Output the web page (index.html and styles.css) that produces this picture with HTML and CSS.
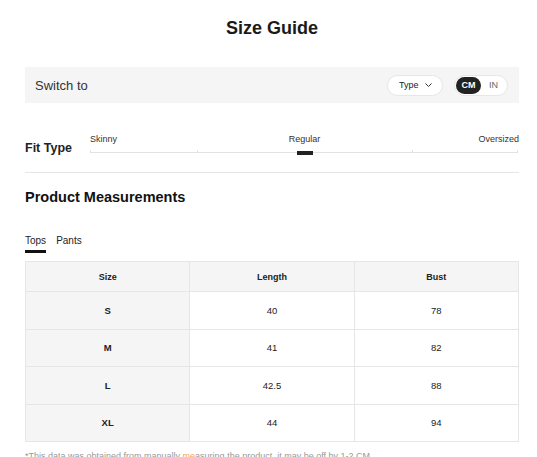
FILE: index.html
```html
<!DOCTYPE html>
<html lang="en">
<head>
<meta charset="utf-8">
<title>Size Guide</title>
<link rel="stylesheet" href="styles.css">
</head>
<body>
<div class="page">
  <h1 class="title">Size Guide</h1>

  <div class="switch-bar">
    <span class="switch-label">Switch to</span>
    <div class="switch-controls">
      <button class="type-pill" type="button">Type
        <svg class="chev" width="7" height="4" viewBox="0 0 7 4"><path d="M0.5 0.5 L3.5 3.5 L6.5 0.5" fill="none" stroke="#333" stroke-width="1"/></svg>
      </button>
      <div class="unit-toggle">
        <span class="unit unit-active">CM</span>
        <span class="unit">IN</span>
      </div>
    </div>
  </div>

  <div class="fit">
    <div class="fit-label">Fit Type</div>
    <div class="fit-scale">
      <div class="fit-names">
        <span class="fit-name-left">Skinny</span>
        <span class="fit-name-center">Regular</span>
        <span class="fit-name-right">Oversized</span>
      </div>
      <div class="fit-track">
        <span class="tick tick-0"></span>
        <span class="tick tick-25"></span>
        <span class="tick tick-75"></span>
        <span class="tick tick-100"></span>
        <span class="fit-marker"></span>
      </div>
    </div>
  </div>

  <div class="divider"></div>

  <h2 class="section-title">Product Measurements</h2>

  <div class="tabs">
    <span class="tab tab-active">Tops</span>
    <span class="tab">Pants</span>
  </div>

  <table class="size-table">
    <thead>
      <tr><th>Size</th><th>Length</th><th>Bust</th></tr>
    </thead>
    <tbody>
      <tr><th>S</th><td>40</td><td>78</td></tr>
      <tr><th>M</th><td>41</td><td>82</td></tr>
      <tr><th>L</th><td>42.5</td><td>88</td></tr>
      <tr><th>XL</th><td>44</td><td>94</td></tr>
    </tbody>
  </table>

  <p class="note">*This data was obtained from manually <span class="note-hl">me</span>asuring the product, it may be off by 1-2 CM.</p>
</div>
</body>
</html>
```

FILE: styles.css
```css
* { box-sizing: border-box; }

html, body {
  margin: 0;
  padding: 0;
  background: #fff;
}

body {
  font-family: "Liberation Sans", Arial, sans-serif;
  color: #222;
}

.page {
  padding: 17px 18px 0 25px;
}

.title {
  margin: 0;
  font-size: 18px;
  line-height: 22px;
  font-weight: 700;
  text-align: center;
  color: #1a1a1a;
}

.switch-bar {
  margin-top: 28px;
  height: 36px;
  background: #f5f5f5;
  display: flex;
  align-items: center;
  justify-content: space-between;
  padding: 0 11px 0 10px;
}

.switch-label {
  font-size: 13px;
  color: #333;
}

.switch-controls {
  display: flex;
  align-items: center;
  gap: 11px;
}

.type-pill {
  height: 21px;
  width: 56px;
  border: 1px solid #e6e6e6;
  border-radius: 11px;
  background: #fff;
  font-family: inherit;
  font-size: 9px;
  color: #222;
  display: flex;
  align-items: center;
  gap: 6px;
  padding: 0 0 0 11px;
  margin: 0;
}

.chev { display: block; }

.unit-toggle {
  height: 21px;
  border: 1px solid #e6e6e6;
  border-radius: 11px;
  background: #fff;
  padding: 1px;
  display: flex;
  align-items: center;
}

.unit {
  height: 17px;
  line-height: 17px;
  font-size: 9px;
  color: #666;
  padding: 0 8px;
}

.unit-active {
  width: 25px;
  padding: 0;
  text-align: center;
  background: #222;
  color: #fff;
  font-weight: 700;
  border-radius: 9px;
}

.fit {
  margin-top: 31px;
  display: flex;
  align-items: flex-start;
}

.fit-label {
  width: 65px;
  padding-top: 7px;
  font-size: 12.5px;
  line-height: 15px;
  font-weight: 700;
  color: #222;
}

.fit-scale {
  flex: 1;
}

.fit-names {
  display: grid;
  grid-template-columns: 1fr 1fr 1fr;
  font-size: 9px;
  line-height: 11px;
  color: #333;
}

.fit-name-left { text-align: left; }
.fit-name-center { text-align: center; }
.fit-name-right { text-align: right; }

.fit-track {
  position: relative;
  margin-top: 5px;
  height: 5px;
}

.fit-track::before {
  content: "";
  position: absolute;
  left: 0;
  right: 1px;
  top: 2px;
  height: 1px;
  background: #e2e2e2;
}

.tick {
  position: absolute;
  top: 0;
  width: 1px;
  height: 3px;
  background: #e2e2e2;
}

.tick-0 { left: 0; }
.tick-25 { left: 25%; }
.tick-75 { left: 75%; }
.tick-100 { right: 1px; }

.fit-marker {
  position: absolute;
  left: 50%;
  top: 1px;
  width: 16px;
  height: 4px;
  margin-left: -8px;
  background: #222;
}

.divider {
  margin-top: 16px;
  height: 1px;
  background: #e5e5e5;
}

.section-title {
  margin: 15px 0 0;
  font-size: 14.5px;
  line-height: 18px;
  font-weight: 700;
  color: #111;
}

.tabs {
  margin-top: 29px;
  display: flex;
  gap: 10px;
}

.tab {
  font-size: 10px;
  line-height: 12px;
  color: #222;
  padding-bottom: 3px;
  border-bottom: 3px solid transparent;
}

.tab-active {
  border-bottom-color: #111;
}

.size-table {
  margin-top: 8px;
  width: 100%;
  table-layout: fixed;
  border-collapse: separate;
  border-spacing: 1px;
  background: #e6e6e6;
  font-size: 9.5px;
}

.size-table th,
.size-table td {
  padding: 0;
  text-align: center;
  vertical-align: middle;
  color: #222;
}

.size-table thead th {
  height: 29px;
  background: #f5f5f5;
  font-weight: 700;
  font-size: 9px;
}

.size-table tbody th {
  height: 36.5px;
  background: #f5f5f5;
  font-weight: 700;
  font-size: 9.5px;
}

.size-table tbody td {
  height: 36.5px;
  background: #fff;
}

.note {
  margin: 8px 0 0;
  font-size: 9px;
  line-height: 12px;
  color: #999;
}

.note-hl {
  color: #f7a35c;
}
```
